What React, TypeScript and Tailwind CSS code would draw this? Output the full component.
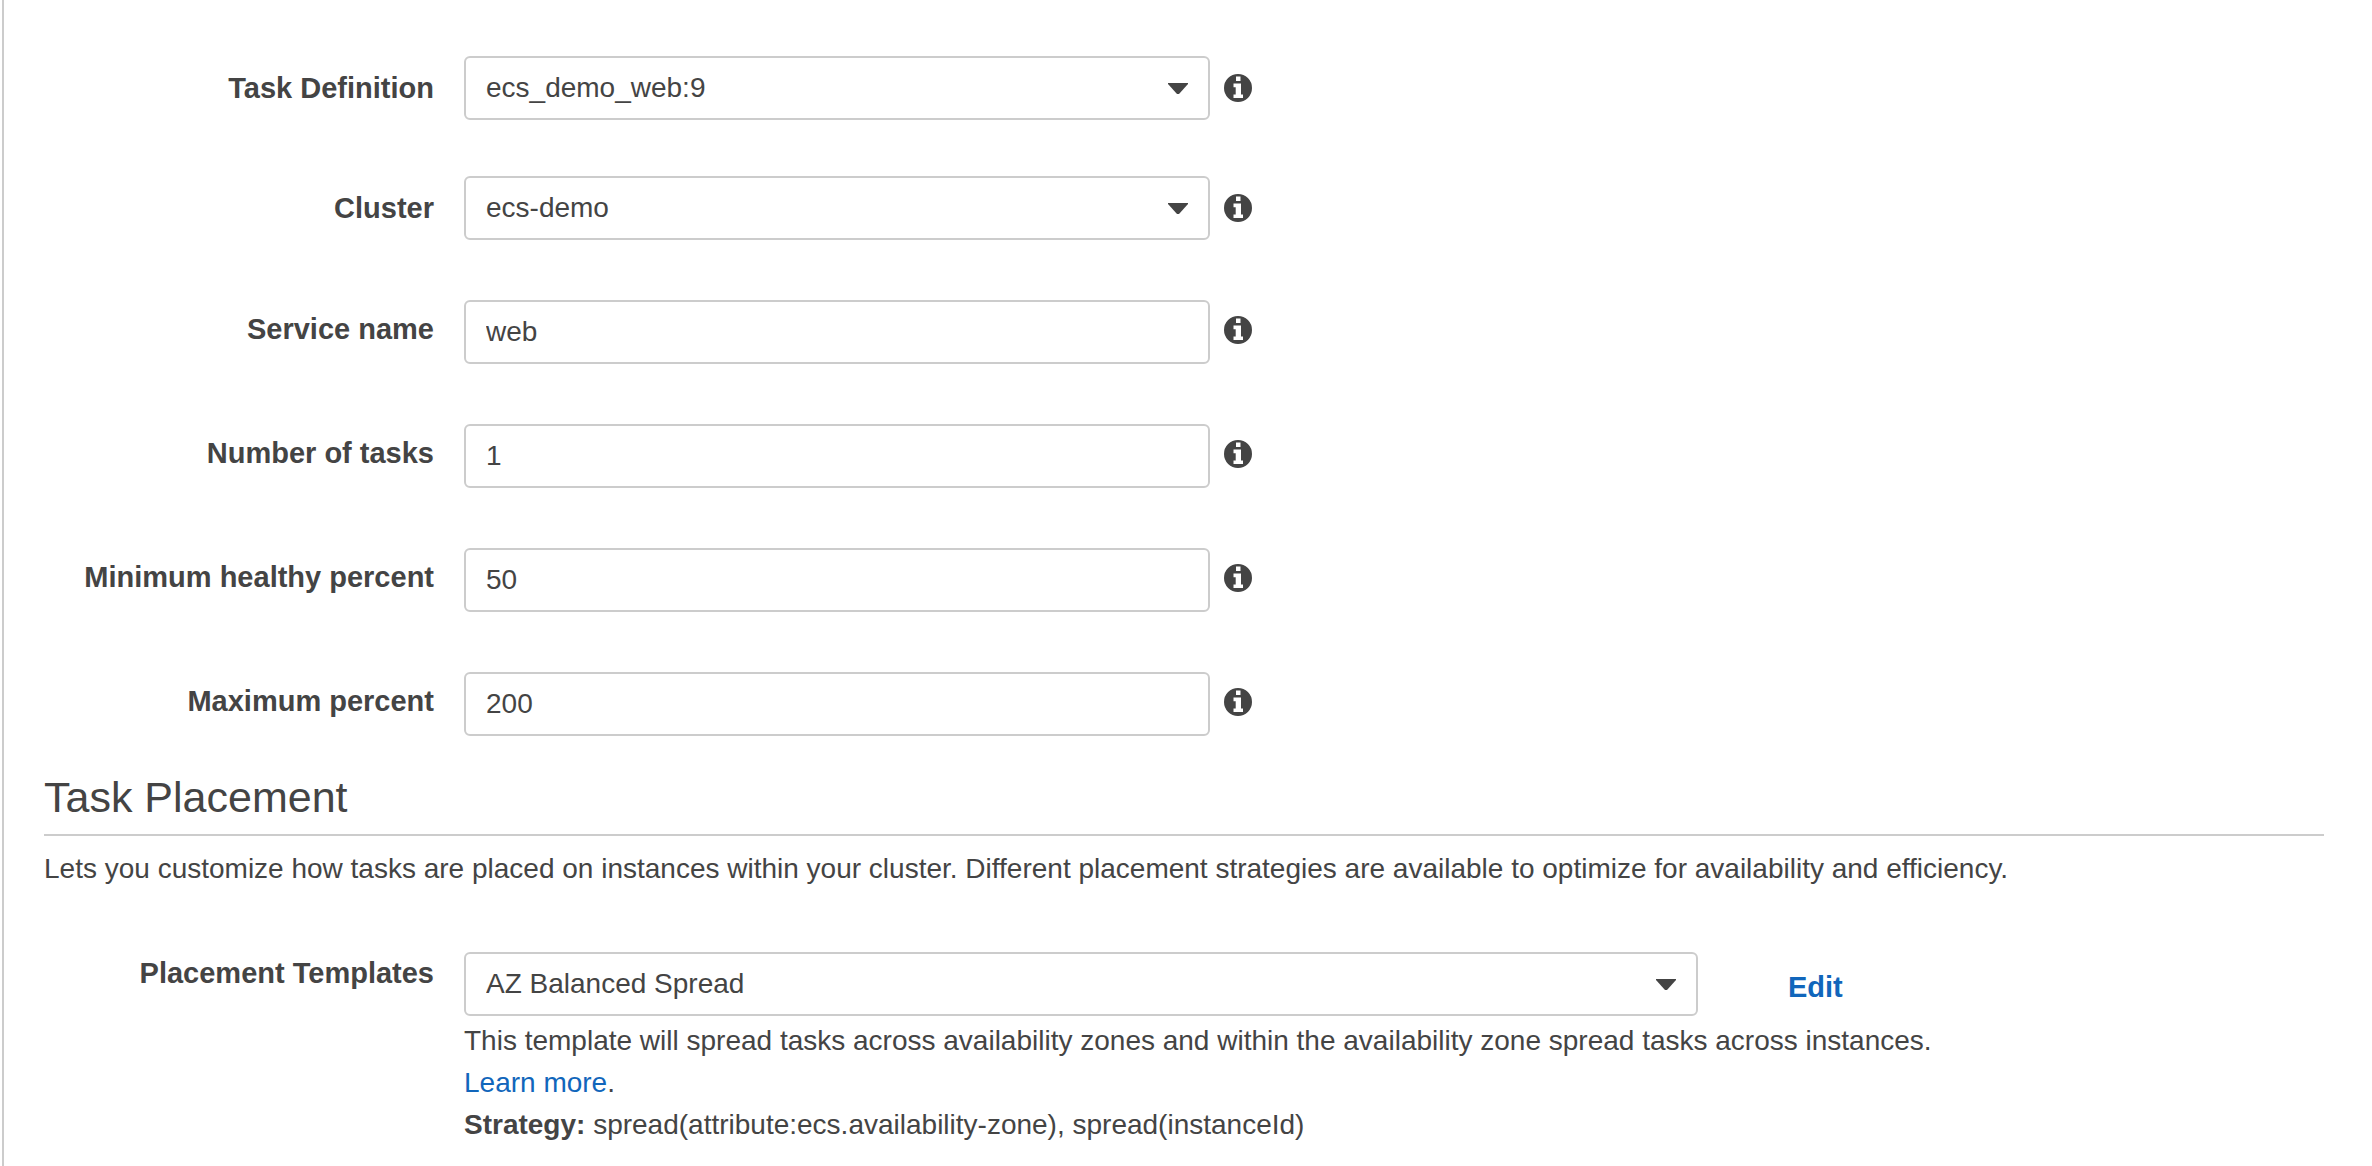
import { useState, type ReactNode } from "react";

function InfoIcon() {
  return (
    <svg viewBox="0 0 28 28" className="size-7 fill-[#444]" aria-hidden="true">
      <path
        fillRule="evenodd"
        d="M14 0a14 14 0 1 1 0 28a14 14 0 0 1 0-28zM12 2.5h4.5v4.5h-4.5zM9.5 9.5h7.5v11h2V24H9.5v-3.5h2.2v-7.3H9.5z"
      />
    </svg>
  );
}

function Label({ htmlFor, children }: { htmlFor: string; children: ReactNode }) {
  return (
    <label htmlFor={htmlFor} className="pr-[30px] text-right text-[29px] font-bold">
      {children}
    </label>
  );
}

const box =
  "h-16 w-full rounded-md border-2 border-[#ccc] bg-white px-5 text-[28px] leading-[42px] text-[#444] outline-none focus:border-[#1166bb]";

function SelectBox({ id, options }: { id: string; options: string[] }) {
  return (
    <div className="relative">
      <select id={id} className={`${box} block appearance-none pr-12`}>
        {options.map((o) => (
          <option key={o}>{o}</option>
        ))}
      </select>
      <svg
        viewBox="0 0 20 12"
        className="pointer-events-none absolute top-[26px] right-[22px] h-3 w-5 fill-[#444]"
        aria-hidden="true"
      >
        <path d="M0 1h20v1L11 12H9L0 2z" />
      </svg>
    </div>
  );
}

function Row({ id, label, children }: { id: string; label: string; children: ReactNode }) {
  return (
    <div className="grid grid-cols-[420fr_746fr_1114fr] items-center">
      <Label htmlFor={id}>{label}</Label>
      {children}
      <button type="button" aria-label={`About ${label}`} className="ml-3.5 w-7">
        <InfoIcon />
      </button>
    </div>
  );
}

function TextRow({ id, label, initial }: { id: string; label: string; initial: string }) {
  const [value, setValue] = useState(initial);
  return (
    <div className="grid grid-cols-[420fr_746fr_1114fr] items-start">
      <div className="flex flex-col pt-2">
        <Label htmlFor={id}>{label}</Label>
      </div>
      <input id={id} type="text" value={value} onChange={(e) => setValue(e.target.value)} className={box} />
      <button type="button" aria-label={`About ${label}`} className="mt-4 ml-3.5 w-7">
        <InfoIcon />
      </button>
    </div>
  );
}

export default function App() {
  return (
    <main className="ml-0.5 min-h-screen border-l-2 border-[#ccc] bg-white pt-14 pr-12 pl-10 font-['Liberation_Sans',Arial,sans-serif] text-[28px] leading-[42px] text-[#444]">
      <form>
        <div className="flex flex-col gap-14">
          <Row id="task-definition" label="Task Definition">
            <SelectBox id="task-definition" options={["ecs_demo_web:9"]} />
          </Row>
          <Row id="cluster" label="Cluster">
            <SelectBox id="cluster" options={["ecs-demo"]} />
          </Row>
        </div>
        <div className="mt-[60px] flex flex-col gap-[60px]">
          <TextRow id="service-name" label="Service name" initial="web" />
          <TextRow id="task-count" label="Number of tasks" initial="1" />
          <TextRow id="min-healthy" label="Minimum healthy percent" initial="50" />
          <TextRow id="max-percent" label="Maximum percent" initial="200" />
        </div>

        <h2 className="mt-8 border-b-2 border-[#ccc] pb-2 text-[43px] leading-[58px]">Task Placement</h2>
        <p className="mt-3">
          Lets you customize how tasks are placed on instances within your cluster. Different placement strategies are
          available to optimize for availability and efficiency.
        </p>

        <div className="mt-[62px] grid grid-cols-[420fr_1234fr_626fr] items-start">
          <Label htmlFor="placement">Placement Templates</Label>
          <SelectBox id="placement" options={["AZ Balanced Spread"]} />
          <button type="button" className="mt-3.5 ml-[90px] justify-self-start text-[29px] font-bold text-[#1166bb]">
            Edit
          </button>
          <div className="col-span-2 col-start-2 pt-1">
            <p>
              This template will spread tasks across availability zones and within the availability zone spread tasks
              across instances.
            </p>
            <p>
              <a href="#learn-more" className="text-[#1166bb]">
                Learn more
              </a>
              .
            </p>
            <p>
              <strong>Strategy:</strong> spread(attribute:ecs.availability-zone), spread(instanceId)
            </p>
          </div>
        </div>
      </form>
    </main>
  );
}
